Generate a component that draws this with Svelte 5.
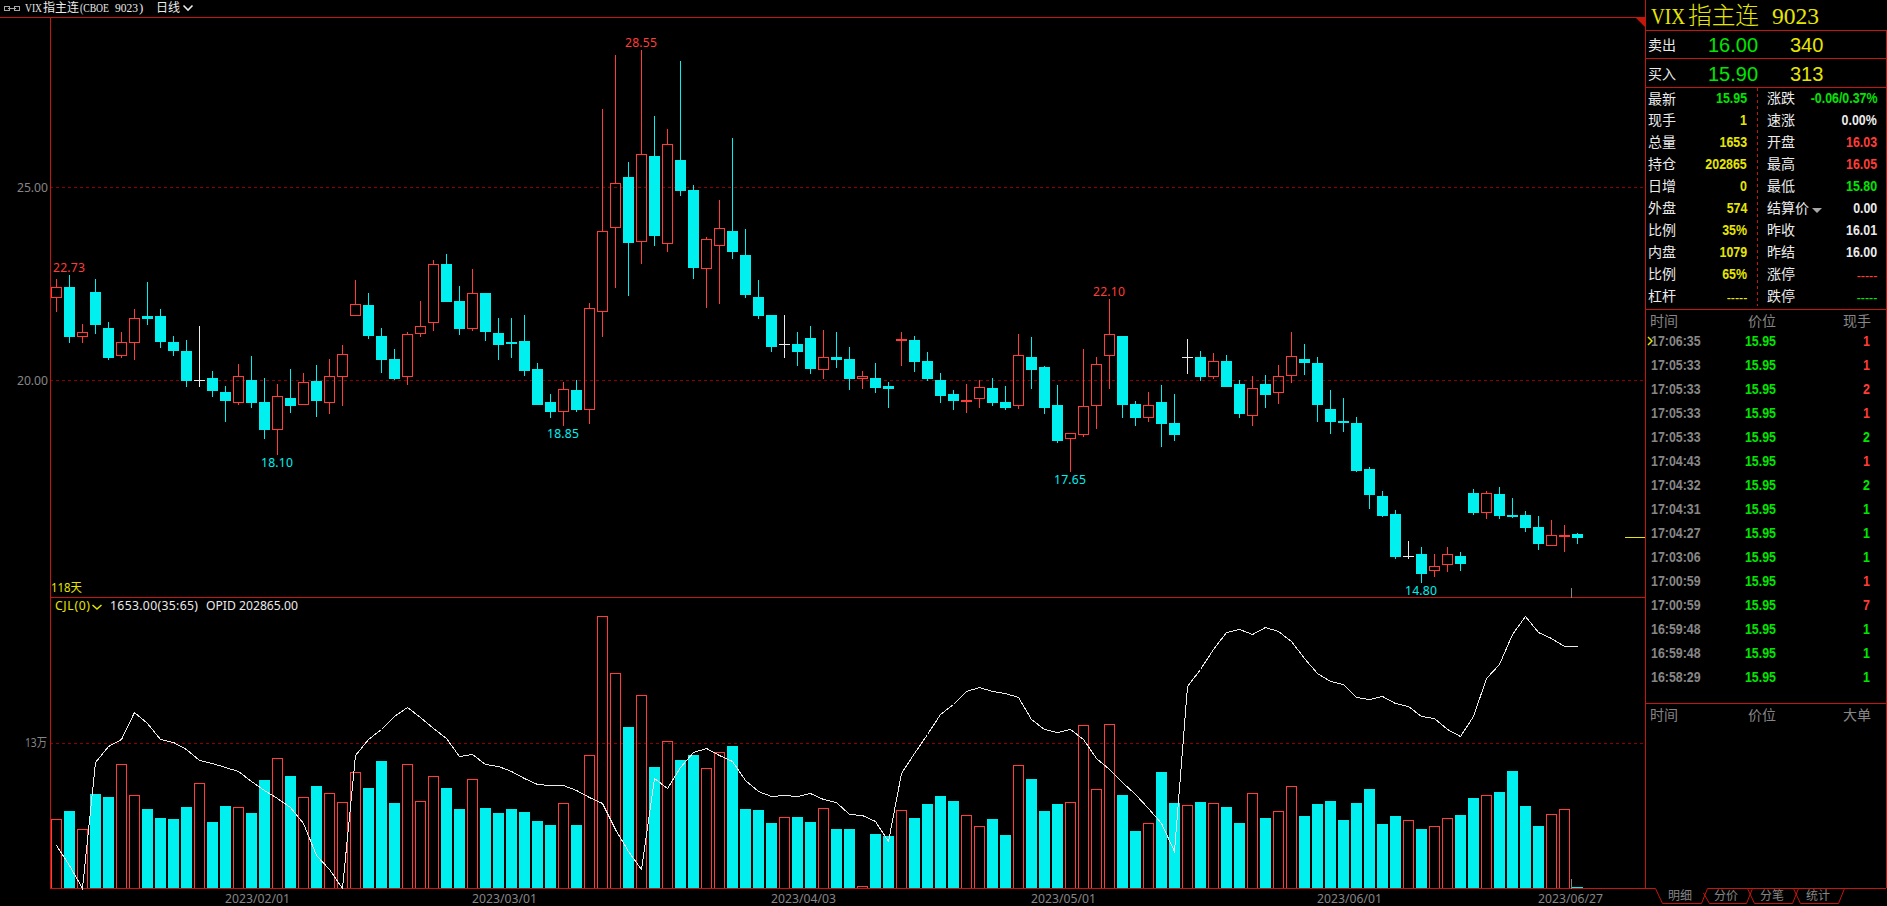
<script lang="ts">
    // kind (r up, c down, w flat), high, body top, body bottom, low, volume top, open interest
    const bars: [string, number, number, number, number, number, number][] = [
        ["r", 279, 287, 298, 312, 819, 845], ["c", 275, 287, 337, 343, 811, 865],
        ["r", 324, 332, 337, 343, 829, 888], ["c", 279, 292, 325, 334, 794, 762],
        ["c", 322, 328, 358, 360, 797, 746], ["r", 332, 342, 356, 358, 764, 739],
        ["r", 309, 318, 343, 360, 795, 712], ["c", 282, 316, 319, 325, 809, 723],
        ["c", 309, 316, 342, 348, 818, 739], ["c", 336, 342, 351, 356, 819, 742],
        ["c", 340, 351, 381, 387, 807, 749], ["w", 326, 380, 381, 387, 783, 760],
        ["c", 371, 378, 391, 397, 822, 763], ["c", 386, 392, 401, 422, 806, 767],
        ["r", 364, 376, 403, 405, 807, 771], ["c", 356, 380, 403, 408, 813, 781],
        ["c", 378, 402, 430, 439, 780, 790], ["r", 384, 396, 430, 455, 758, 798],
        ["c", 369, 398, 406, 413, 776, 807], ["r", 373, 382, 405, 405, 797, 823],
        ["c", 365, 381, 401, 417, 786, 855], ["r", 359, 376, 403, 414, 793, 869],
        ["r", 345, 354, 377, 406, 802, 888], ["r", 280, 304, 316, 316, 772, 755],
        ["c", 293, 305, 336, 339, 788, 739], ["c", 328, 336, 360, 373, 761, 729],
        ["c", 349, 359, 379, 380, 803, 716], ["r", 332, 334, 377, 385, 764, 707],
        ["r", 301, 326, 334, 337, 801, 717], ["r", 260, 264, 323, 331, 776, 728],
        ["c", 254, 264, 302, 302, 788, 738], ["c", 286, 301, 329, 335, 809, 756],
        ["r", 269, 293, 329, 331, 779, 754], ["c", 293, 293, 332, 341, 808, 764],
        ["c", 318, 333, 345, 360, 813, 766], ["c", 318, 342, 344, 358, 809, 771],
        ["c", 315, 341, 371, 376, 812, 778], ["c", 363, 369, 405, 405, 821, 784],
        ["c", 394, 402, 412, 418, 825, 785], ["r", 382, 389, 412, 426, 803, 785],
        ["c", 380, 390, 410, 412, 825, 790], ["r", 303, 308, 410, 424, 755, 797],
        ["r", 109, 231, 312, 337, 616, 803], ["r", 55, 183, 228, 288, 673, 829],
        ["c", 162, 177, 243, 296, 727, 851], ["r", 50, 154, 242, 264, 695, 869],
        ["c", 116, 156, 236, 246, 767, 778], ["r", 129, 144, 244, 252, 741, 788],
        ["c", 61, 160, 191, 196, 760, 767], ["c", 185, 190, 268, 279, 755, 752],
        ["r", 237, 239, 269, 308, 768, 748], ["r", 200, 228, 246, 304, 752, 755],
        ["c", 138, 231, 252, 259, 746, 761], ["c", 229, 255, 295, 298, 809, 780],
        ["c", 280, 297, 316, 319, 810, 791], ["c", 315, 315, 347, 352, 823, 796],
        ["w", 315, 344, 345, 358, 817, 795], ["c", 332, 344, 352, 366, 817, 796],
        ["c", 326, 338, 369, 374, 822, 793], ["r", 330, 357, 370, 379, 808, 799],
        ["c", 332, 357, 360, 368, 829, 802], ["c", 347, 359, 379, 390, 829, 814],
        ["r", 371, 376, 379, 389, 886, 815], ["c", 363, 378, 388, 393, 834, 821],
        ["c", 382, 386, 389, 408, 836, 841], ["r", 332, 339, 341, 366, 810, 773],
        ["c", 336, 340, 362, 372, 818, 753], ["c", 352, 361, 379, 381, 804, 734],
        ["c", 373, 380, 396, 403, 796, 714], ["c", 390, 394, 401, 410, 801, 704],
        ["r", 384, 400, 402, 413, 815, 691], ["r", 380, 387, 399, 408, 826, 687],
        ["c", 378, 388, 403, 406, 819, 691], ["c", 386, 402, 408, 410, 835, 693],
        ["r", 334, 355, 406, 409, 765, 697], ["c", 337, 357, 370, 389, 779, 719],
        ["c", 366, 367, 408, 414, 811, 729], ["c", 385, 405, 441, 443, 804, 732],
        ["r", 433, 433, 439, 472, 802, 729], ["r", 349, 406, 435, 437, 725, 739],
        ["r", 357, 364, 406, 429, 789, 758], ["r", 299, 334, 356, 389, 724, 769],
        ["c", 336, 336, 405, 418, 795, 782], ["c", 401, 404, 418, 426, 831, 794],
        ["r", 392, 405, 418, 422, 823, 808], ["c", 385, 402, 424, 447, 772, 823],
        ["c", 394, 423, 435, 441, 803, 851], ["w", 339, 357, 358, 374, 805, 686],
        ["c", 351, 357, 377, 381, 802, 669], ["r", 353, 361, 377, 379, 803, 649],
        ["c", 355, 361, 387, 387, 807, 632], ["c", 380, 384, 414, 418, 823, 629],
        ["r", 376, 388, 416, 426, 793, 634], ["c", 375, 384, 395, 408, 818, 627],
        ["r", 365, 376, 393, 404, 811, 631], ["r", 332, 356, 376, 383, 786, 641],
        ["c", 344, 359, 363, 375, 816, 658], ["c", 357, 363, 405, 422, 804, 673],
        ["c", 390, 409, 422, 434, 801, 681], ["c", 398, 421, 423, 432, 820, 684],
        ["c", 417, 423, 471, 472, 803, 697], ["c", 467, 469, 495, 509, 789, 699],
        ["c", 491, 496, 516, 517, 824, 696], ["c", 510, 514, 557, 559, 816, 703],
        ["w", 541, 556, 557, 559, 820, 706], ["c", 547, 554, 574, 583, 829, 716],
        ["r", 554, 566, 571, 577, 826, 718], ["r", 547, 554, 565, 572, 818, 729],
        ["c", 552, 556, 564, 571, 815, 736], ["c", 489, 493, 513, 515, 798, 716],
        ["r", 491, 493, 513, 519, 795, 678], ["c", 487, 494, 516, 519, 792, 664],
        ["c", 498, 515, 517, 518, 771, 634], ["c", 511, 515, 528, 532, 806, 616],
        ["c", 516, 527, 544, 550, 826, 632], ["r", 520, 535, 546, 546, 814, 638],
        ["r", 525, 535, 537, 552, 809, 646], ["c", 533, 534, 538, 544, 887, 646],
    ]

    const step = 13
    const base = 888
    const interest = bars.map((b, i) => `${56.5 + i * step},${b[6] + 0.5}`).join(" ")

    const marks = [
        { x: 53, y: 272, text: "22.73", kind: "r" },
        { x: 261, y: 467, text: "18.10", kind: "c" },
        { x: 547, y: 438, text: "18.85", kind: "c" },
        { x: 625, y: 47, text: "28.55", kind: "r" },
        { x: 1054, y: 484, text: "17.65", kind: "c" },
        { x: 1093, y: 296, text: "22.10", kind: "r" },
        { x: 1405, y: 595, text: "14.80", kind: "c" },
    ]

    const dates = [
        { x: 225, text: "2023/02/01" },
        { x: 472, text: "2023/03/01" },
        { x: 771, text: "2023/04/03" },
        { x: 1031, text: "2023/05/01" },
        { x: 1317, text: "2023/06/01" },
        { x: 1538, text: "2023/06/27" },
    ]

    const left = [
        ["最新", "15.95", "green"],
        ["现手", "1", "yellow"],
        ["总量", "1653", "yellow"],
        ["持仓", "202865", "yellow"],
        ["日增", "0", "yellow"],
        ["外盘", "574", "yellow"],
        ["比例", "35%", "yellow"],
        ["内盘", "1079", "yellow"],
        ["比例", "65%", "yellow"],
        ["杠杆", "-----", "yellow empty"],
    ]

    const right = [
        ["涨跌", "-0.06/0.37%", "green"],
        ["速涨", "0.00%", "white"],
        ["开盘", "16.03", "red"],
        ["最高", "16.05", "red"],
        ["最低", "15.80", "green"],
        ["结算价", "0.00", "white"],
        ["昨收", "16.01", "white"],
        ["昨结", "16.00", "white"],
        ["涨停", "-----", "red empty"],
        ["跌停", "-----", "green empty"],
    ]

    const trades = [
        ["17:06:35", "1", "red"],
        ["17:05:33", "1", "red"],
        ["17:05:33", "2", "red"],
        ["17:05:33", "1", "red"],
        ["17:05:33", "2", "green"],
        ["17:04:43", "1", "red"],
        ["17:04:32", "2", "green"],
        ["17:04:31", "1", "green"],
        ["17:04:27", "1", "green"],
        ["17:03:06", "1", "green"],
        ["17:00:59", "1", "red"],
        ["17:00:59", "7", "red"],
        ["16:59:48", "1", "green"],
        ["16:59:48", "1", "green"],
        ["16:58:29", "1", "green"],
    ]

    const tabs = ["明细", "分价", "分笔", "统计"]
</script>


<div class="terminal">
    <div class="main">
        <header>
            <svg class="link" width="18" height="8" viewBox="0 0 18 8">
                <path d="M6.5 3v-1.5h-5v4h5v-1.5M5 3.5h8M11.5 3v-1.5h5v4h-5v-1.5" />
            </svg>
            <svg class="caption" width="170" height="17">
                <text x="0" y="12" textLength="17" lengthAdjust="spacingAndGlyphs">VIX</text>
                <text class="cjk" x="18" y="12" textLength="36" lengthAdjust="spacingAndGlyphs">指主连</text>
                <text x="55" y="12" textLength="29" lengthAdjust="spacingAndGlyphs">(CBOE</text>
                <text x="90" y="12" textLength="23" lengthAdjust="spacingAndGlyphs">9023</text>
                <text x="114" y="12">)</text>
                <text class="cjk" x="131" y="12" textLength="24" lengthAdjust="spacingAndGlyphs">日线</text>
                <path d="M158.5 5.5l4.5 4.5l4.5 -4.5" />
            </svg>
        </header>

        <svg class="chart" width="1645" height="889" viewBox="0 17 1645 889">
            <g class="grid">
                <line x1="50" x2="1643" y1="187.5" y2="187.5" />
                <line x1="50" x2="1643" y1="380.5" y2="380.5" />
                <line x1="50" x2="1643" y1="743.5" y2="743.5" />
            </g>

            <g class="frame">
                <rect x="0" y="17" width="1645" height="1" />
                <rect x="50" y="17" width="1" height="872" />
                <rect x="50" y="597" width="1595" height="1" />
                <path d="M1635 17h10v10z" />
            </g>

            {#each bars as [kind, high, top, bottom, low, volume], i}
                <g class="bar {kind}">
                    <rect class="fill" x={56 + i * step} y={high} width="1" height={top - high} />
                    <rect class="fill" x={56 + i * step} y={bottom} width="1" height={low - bottom} />
                    {#if kind === "r"}
                        <rect class="hollow" x={51.5 + i * step} y={top + 0.5} width="10" height={bottom - top - 1} />
                    {:else}
                        <rect class="fill" x={51 + i * step} y={top} width="11" height={bottom - top} />
                    {/if}
                </g>
                <g class="bar {kind === 'c' ? 'c' : 'r'}">
                    {#if kind === "c"}
                        <rect class="fill" x={51 + i * step} y={volume} width="11" height={base - volume} />
                    {:else}
                        <rect class="hollow" x={51.5 + i * step} y={volume + 0.5} width="10" height={base - volume} />
                    {/if}
                </g>
            {/each}

            <rect class="baseline" x="50" y="888" width="1595" height="1" />
            <polyline points={interest} />

            <rect class="tick" x="1571" y="588" width="1" height="10" />
            <rect class="tick" x="1571" y="879" width="1" height="10" />
            <rect class="last" x="1625" y="537" width="20" height="1" />

            {#each marks as mark}
                <text class={mark.kind} x={mark.x} y={mark.y} textLength="32">{mark.text}</text>
            {/each}

            <text x="17" y="192" textLength="31">25.00</text>
            <text x="17" y="385" textLength="31">20.00</text>
            <text x="25" y="747" textLength="22" lengthAdjust="spacingAndGlyphs">13万</text>

            <text class="y" x="51" y="592" textLength="31" lengthAdjust="spacingAndGlyphs">118天</text>
            <text class="y" x="55" y="610" textLength="35">CJL(0)</text>
            <path class="arrow" d="M92.5 605l4.5 4l4.5 -4" />
            <text class="w" x="110" y="610" textLength="88">1653.00(35:65)</text>
            <text class="w" x="206" y="610" textLength="92">OPID 202865.00</text>

            {#each dates as date}
                <text x={date.x} y="903" textLength="65">{date.text}</text>
            {/each}
        </svg>
    </div>

    <aside>
        <svg class="name" width="240" height="30">
            <text x="5" y="24" textLength="34" lengthAdjust="spacingAndGlyphs">VIX</text>
            <text x="42" y="24" textLength="71" lengthAdjust="spacingAndGlyphs">指主连</text>
            <text x="126" y="24" textLength="47" lengthAdjust="spacingAndGlyphs">9023</text>
        </svg>

        <div class="panel">
            <div class="offer sell">
                <span class="label">卖出</span>
                <span class="price">16.00</span>
                <span class="amount">340</span>
            </div>
            <div class="offer buy">
                <span class="label">买入</span>
                <span class="price">15.90</span>
                <span class="amount">313</span>
            </div>

            <div class="quotes">
                <div class="column">
                    {#each left as [label, value, color]}
                        <div class="row">
                            <span class="label">{label}</span>
                            <span class="value {color}">{value}</span>
                        </div>
                    {/each}
                </div>
                <svg class="divider" width="1" height="220">
                    <line x1="0.5" x2="0.5" y1="0" y2="218" />
                </svg>
                <div class="column">
                    {#each right as [label, value, color]}
                        <div class="row">
                            <span class="label">{label}{#if label === "结算价"}<i class="drop"></i>{/if}</span>
                            <span class="value {color}">{value}</span>
                        </div>
                    {/each}
                </div>
            </div>

            <div class="trades">
                <div class="head">
                    <span>时间</span>
                    <span>价位</span>
                    <span>现手</span>
                </div>
                {#each trades as [time, amount, color], i}
                    <div class="trade">
                        {#if i === 0}
                            <svg class="pointer" width="6" height="10"><path d="M1 1l4 4l-4 4" /></svg>
                        {/if}
                        <span class="time">{time}</span>
                        <span class="value green">15.95</span>
                        <span class="value {color}">{amount}</span>
                    </div>
                {/each}
            </div>

            <div class="big">
                <div class="head">
                    <span>时间</span>
                    <span>价位</span>
                    <span>大单</span>
                </div>
            </div>
        </div>

        <div class="tabs">
            <svg width="242" height="18">
                <path d="M0 0.5H10.5L17.5 15.5H56.5L62.5 0.5H241M58.5 5L64.5 15.5H101.5L107.5 0.5M102.5 0.5L109.5 15.5H147.5L153.5 0.5M148.5 0.5L155.5 15.5H193.5L199.5 0.5" />
            </svg>
            {#each tabs as tab}
                <span>{tab}</span>
            {/each}
        </div>
    </aside>
</div>


<style>

    :global(body) {
        margin: 0;
        background-color: #000;
    }

    .terminal {
        --line: #c4160a;
        --red: #ff3c38;
        --cyan: #00f0f0;
        --green: #00e600;
        --yellow: #e6e600;
        --white: #ebebeb;
        --gray: #868686;
        display: flex;
        width: 1887px;
        height: 906px;
        overflow: hidden;
        background-color: #000;
        color: var(--white);
        font-family: "Liberation Sans", "Noto Sans CJK SC", sans-serif;
    }

    .terminal svg {
        display: block;
        flex: none;
    }

    .main {
        width: 1645px;
        flex: none;
    }

    header {
        display: flex;
        align-items: center;
        gap: 4px;
        height: 17px;
        padding-left: 3px;
    }

    .link path {
        fill: none;
        stroke: #a8a8a8;
        shape-rendering: crispEdges;
    }

    .caption text {
        fill: var(--white);
        font-family: "Liberation Serif", "Noto Sans CJK SC", serif;
        font-size: 13px;
    }

    .caption .cjk {
        font-size: 12px;
    }

    .caption path {
        fill: none;
        stroke: var(--white);
        stroke-width: 1.6;
    }

    .chart text {
        fill: var(--gray);
        font-family: "Noto Sans", "Noto Sans CJK SC", sans-serif;
        font-size: 12.2px;
    }

    .chart rect, .chart line, .chart polyline {
        shape-rendering: crispEdges;
    }

    .grid line {
        stroke: #8c0000;
        stroke-dasharray: 3 3;
    }

    .frame, .baseline {
        fill: var(--line);
    }

    .bar.r {
        --bar: var(--red);
    }

    .bar.c {
        --bar: var(--cyan);
    }

    .bar.w {
        --bar: var(--white);
    }

    .fill {
        fill: var(--bar);
    }

    .hollow {
        fill: none;
        stroke: var(--bar);
    }

    .chart text.r {
        fill: var(--red);
    }

    .chart text.c {
        fill: var(--cyan);
    }

    .chart text.y {
        fill: var(--yellow);
    }

    .chart text.w {
        fill: var(--white);
    }

    polyline {
        fill: none;
        stroke: var(--white);
    }

    .tick {
        fill: var(--gray);
    }

    .last {
        fill: var(--yellow);
    }

    .arrow {
        fill: none;
        stroke: var(--yellow);
        stroke-width: 1.5;
    }

    aside {
        display: flex;
        flex-direction: column;
        width: 242px;
        flex: none;
    }

    .name {
        border-left: 1px solid var(--line);
    }

    .name text {
        fill: var(--yellow);
        font-family: "Liberation Serif", "Noto Sans CJK SC", serif;
        font-size: 24px;
        font-weight: 300;
    }

    .panel {
        box-sizing: border-box;
        height: 858px;
        border: 1px solid var(--line);
        border-bottom: none;
    }

    .offer {
        box-sizing: border-box;
        display: grid;
        grid-template-columns: 60px 82px 1fr;
        align-items: center;
        padding-left: 2px;
        border-bottom: 1px solid var(--line);
    }

    .sell {
        height: 28px;
    }

    .buy {
        height: 29px;
    }

    .buy .label, .buy .price, .buy .amount {
        padding-top: 1px;
    }

    .price, .amount {
        font-size: 20px;
        line-height: 26px;
    }

    .price {
        color: var(--green);
    }

    .amount {
        color: var(--yellow);
    }

    .label {
        font-size: 14px;
        line-height: 22px;
    }

    .quotes {
        display: flex;
        height: 221px;
        border-bottom: 1px solid var(--line);
    }

    .column {
        box-sizing: border-box;
        width: 111px;
        margin-top: -1px;
        padding: 0 10px 0 2px;
    }

    .column:last-child {
        width: 128px;
        padding: 0 9px;
    }

    .row {
        display: flex;
        justify-content: space-between;
        height: 22px;
    }

    .column:first-child .row:first-child .label {
        padding-top: 1px;
    }

    .divider line {
        stroke: var(--line);
        stroke-dasharray: 3 3;
    }

    .drop {
        display: inline-block;
        margin: 0 0 0 3px;
        border: 5px solid transparent;
        border-top-color: #a8a8a8;
        border-bottom: none;
    }

    .value, .time {
        font-size: 14px;
        font-weight: bold;
        line-height: 22px;
        transform: scaleX(0.885);
        transform-origin: right center;
        white-space: nowrap;
    }

    .time {
        color: var(--gray);
        transform-origin: left center;
    }

    .empty {
        padding-top: 2px;
        font-weight: normal;
    }

    .green {
        color: var(--green);
    }

    .yellow {
        color: var(--yellow);
    }

    .red {
        color: var(--red);
    }

    .trades {
        box-sizing: border-box;
        height: 394px;
        border-bottom: 1px solid var(--line);
    }

    .head {
        display: grid;
        grid-template-columns: 98px 95px 1fr;
        height: 19px;
        padding-left: 4px;
        color: var(--gray);
        font-size: 14px;
        line-height: 23px;
    }

    .trade {
        position: relative;
        display: grid;
        grid-template-columns: 60px 65px 1fr;
        align-items: center;
        height: 24px;
        padding: 0 16px 0 5px;
    }

    .trade .value {
        text-align: right;
    }

    .pointer {
        position: absolute;
        left: 1px;
        top: 7px;
    }

    .pointer path {
        fill: none;
        stroke: var(--yellow);
        stroke-width: 1.5;
    }

    .tabs {
        position: relative;
        display: flex;
        gap: 22px;
        height: 18px;
        padding-left: 23px;
        color: var(--gray);
        font-size: 12px;
        line-height: 17px;
    }

    .tabs svg {
        position: absolute;
        left: 0;
        top: 0;
    }

    .tabs path {
        fill: none;
        stroke: var(--line);
    }

</style>
